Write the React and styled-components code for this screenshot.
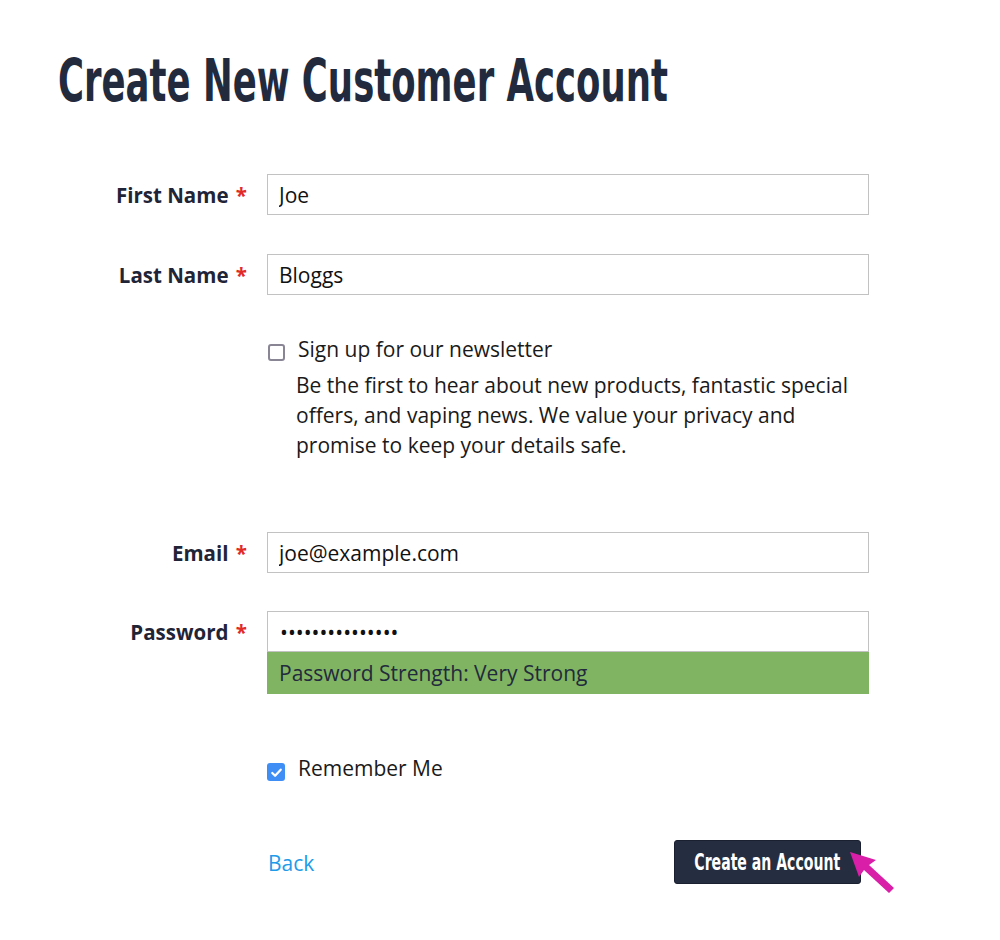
import React, { useState } from "react";
import styled, { createGlobalStyle } from "styled-components";

const GlobalStyle = createGlobalStyle`
  body {
    margin: 0;
    background: #ffffff;
    font-family: "Open Sans", "Noto Sans", sans-serif;
    color: #1f2537;
  }
`;

export default function App() {
  const [first, setFirst] = useState("Joe");
  const [last, setLast] = useState("Bloggs");
  const [email, setEmail] = useState("joe@example.com");
  const [password, setPassword] = useState("passwordpasswor");
  const [newsletter, setNewsletter] = useState(false);
  const [remember, setRemember] = useState(true);

  return (
    <>
      <GlobalStyle />
      <Page>
        <Title>Create New Customer Account</Title>
        <Form onSubmit={(e) => e.preventDefault()}>
          <Row>
            <Label htmlFor="firstname">
              First Name <Star>*</Star>
            </Label>
            <Input id="firstname" value={first} onChange={(e) => setFirst(e.target.value)} />
          </Row>
          <Row $top="39px">
            <Label htmlFor="lastname">
              Last Name <Star>*</Star>
            </Label>
            <Input id="lastname" value={last} onChange={(e) => setLast(e.target.value)} />
          </Row>

          <Row $top="39px">
            <span />
            <div>
              <CheckLine>
                <Box type="checkbox" checked={newsletter} onChange={() => setNewsletter(!newsletter)} />
                Sign up for our newsletter
              </CheckLine>
              <Note>
                Be the first to hear about new products, fantastic special offers, and vaping
                news. We value your privacy and promise to keep your details safe.
              </Note>
            </div>
          </Row>

          <Row $top="72px">
            <Label htmlFor="email">
              Email <Star>*</Star>
            </Label>
            <Input id="email" value={email} onChange={(e) => setEmail(e.target.value)} />
          </Row>
          <Row $top="38px">
            <Label htmlFor="password">
              Password <Star>*</Star>
            </Label>
            <div>
              <Input
                id="password"
                type="password"
                value={password}
                onChange={(e) => setPassword(e.target.value)}
              />
              <Strength>Password Strength: Very Strong</Strength>
            </div>
          </Row>

          <Row $top="59px">
            <span />
            <CheckLine>
              <Box type="checkbox" checked={remember} onChange={() => setRemember(!remember)} />
              Remember Me
            </CheckLine>
          </Row>

          <Row $top="57px">
            <span />
            <Actions>
              <BackLink href="#">Back</BackLink>
              <ButtonWrap>
                <Submit type="submit">
                  <Narrow>Create an Account</Narrow>
                </Submit>
                <Pointer viewBox="0 0 60 56" aria-hidden="true">
                  <path d="M4 6 L30 14 L23 19 L48 42 L43 47 L18 24 L13 31 Z" fill="#d91ea8" />
                </Pointer>
              </ButtonWrap>
            </Actions>
          </Row>
        </Form>
      </Page>
    </>
  );
}

const Page = styled.div`
  padding: 46px 0 40px 58px;
  box-sizing: border-box;
`;

const Title = styled.h1`
  margin: 0 0 58px 0;
  font-family: "DejaVu Sans Condensed", "DejaVu Sans", sans-serif;
  font-weight: 700;
  font-size: 58px;
  line-height: 70px;
  color: #222a3d;
  letter-spacing: 0;
  transform: scaleX(0.68);
  transform-origin: left center;
  white-space: nowrap;
`;

const Form = styled.form`
  display: flex;
  flex-direction: column;
`;

const Row = styled.div`
  display: grid;
  grid-template-columns: 189px 602px;
  column-gap: 20px;
  align-items: start;
  margin-top: ${(p) => p.$top || "0"};
`;

const Label = styled.label`
  height: 41px;
  text-align: right;
  font-weight: 700;
  font-size: 20.5px;
  line-height: 43px;
  color: #1f2537;
  white-space: nowrap;
`;

const Star = styled.span`
  color: #e02b27;
  margin-left: 2px;
`;

const Input = styled.input`
  display: block;
  width: 100%;
  height: 41px;
  box-sizing: border-box;
  border: 1px solid #c2c2c2;
  padding: 0 11px;
  font-family: "Open Sans", sans-serif;
  font-size: 21px;
  color: #111;
  background: #fff;
  outline: none;
  border-radius: 0;
  &[type="password"] {
    padding-left: 12px;
  }
`;

const Strength = styled.div`
  background: #80b462;
  height: 42px;
  line-height: 42px;
  padding: 0 12px;
  font-size: 21px;
  color: #222a3d;
`;

const CheckLine = styled.label`
  display: flex;
  align-items: center;
  gap: 13px;
  font-size: 21px;
  line-height: 30px;
  color: #1a1a1a;
  cursor: pointer;
`;

const Box = styled.input`
  appearance: none;
  flex-shrink: 0;
  margin: 6px 0 0 1px;
  width: 17px;
  height: 17px;
  box-sizing: border-box;
  border: 2px solid #8a8595;
  border-radius: 3px;
  background: #fff;
  cursor: pointer;
  &:checked {
    width: 18px;
    height: 18px;
    margin-left: 0;
    margin-top: 8px;
    border: none;
    background: #3f8ef5
      url("data:image/svg+xml,%3Csvg xmlns='http://www.w3.org/2000/svg' viewBox='0 0 16 16'%3E%3Cpath d='M3.5 8.5l3 3 6-6.5' fill='none' stroke='white' stroke-width='2.4' stroke-linecap='round' stroke-linejoin='round'/%3E%3C/svg%3E")
      center / 15px no-repeat;
  }
`;

const Note = styled.p`
  margin: 6px 0 0 29px;
  max-width: 556px;
  font-size: 21px;
  line-height: 30px;
  color: #1a1a1a;
`;

const Actions = styled.div`
  display: flex;
  justify-content: space-between;
  align-items: center;
  padding-right: 8px;
`;

const BackLink = styled.a`
  color: #1e9be9;
  font-size: 21px;
  text-decoration: none;
  margin-left: 1px;
  margin-top: 2px;
`;

const ButtonWrap = styled.div`
  position: relative;
`;

const Submit = styled.button`
  display: flex;
  justify-content: center;
  align-items: center;
  width: 187px;
  height: 44px;
  padding: 0;
  background: #252d40;
  color: #fff;
  border: 1px solid #1a2030;
  border-radius: 3px;
  font-family: "DejaVu Sans Condensed", "DejaVu Sans", sans-serif;
  font-weight: 700;
  font-size: 23px;
  cursor: pointer;
`;

const Narrow = styled.span`
  display: inline-block;
  white-space: nowrap;
  transform: scaleX(0.68);
  transform-origin: center;
`;

const Pointer = styled.svg`
  position: absolute;
  left: 172px;
  top: 6px;
  width: 60px;
  height: 56px;
  pointer-events: none;
`;
